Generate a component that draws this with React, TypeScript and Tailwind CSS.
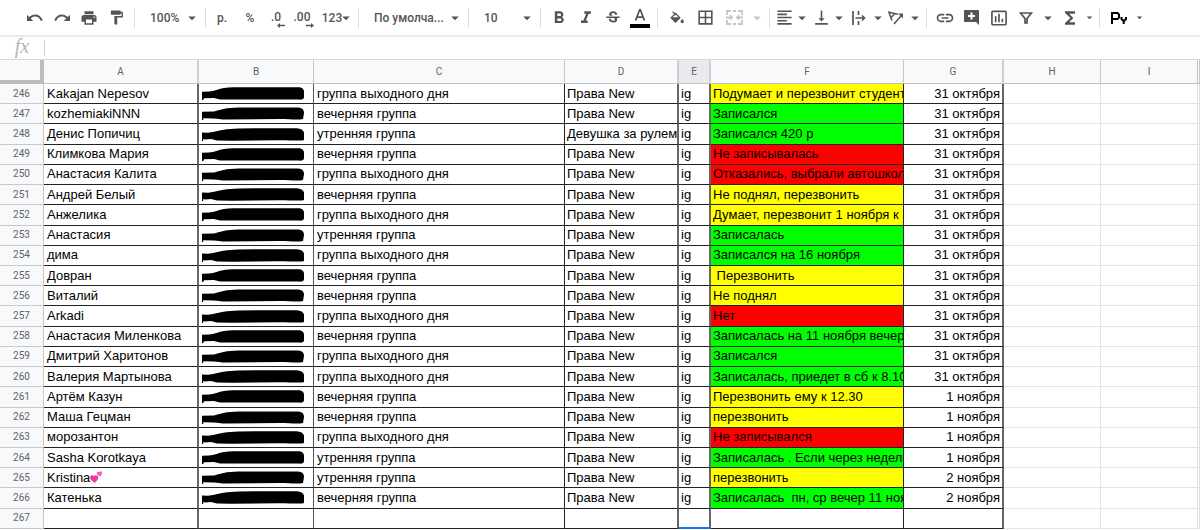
import type { ReactNode } from "react";
import {
  MdPrint, MdFormatPaint, MdArrowDropDown, MdFormatBold, MdFormatItalic,
  MdStrikethroughS, MdBorderAll, MdFormatAlignLeft, MdVerticalAlignBottom,
  MdInsertLink, MdInsertChartOutlined, MdFunctions,
} from "react-icons/md";

type Tone = "y" | "g" | "r";
type Row = [number, string, string, string, Tone, string, string];

const WEEKEND = "группа выходного дня";
const EVENING = "вечерняя группа";
const MORNING = "утренняя группа";
const NEW = "Права New";
const OCT = "31 октября";

const rows: Row[] = [
  [246, "Kakajan Nepesov", WEEKEND, NEW, "y", "Подумает и перезвонит студент", OCT],
  [247, "kozhemiakiNNN", EVENING, NEW, "g", "Записался", OCT],
  [248, "Денис Попичиц", MORNING, "Девушка за рулем", "g", "Записался 420 р", OCT],
  [249, "Климкова Мария", EVENING, NEW, "r", "Не записывалась", OCT],
  [250, "Анастасия Калита", WEEKEND, NEW, "r", "Отказались, выбрали автошколу", OCT],
  [251, "Андрей Белый", EVENING, NEW, "y", "Не поднял, перезвонить", OCT],
  [252, "Анжелика", WEEKEND, NEW, "y", "Думает, перезвонит 1 ноября к ве", OCT],
  [253, "Анастасия", MORNING, NEW, "g", "Записалась", OCT],
  [254, "дима", WEEKEND, NEW, "g", "Записался на 16 ноября", OCT],
  [255, "Довран", EVENING, NEW, "y", " Перезвонить", OCT],
  [256, "Виталий", EVENING, NEW, "y", "Не поднял", OCT],
  [257, "Arkadi", WEEKEND, NEW, "r", "Нет", OCT],
  [258, "Анастасия Миленкова", EVENING, NEW, "g", "Записалась на 11 ноября вечер п", OCT],
  [259, "Дмитрий Харитонов", WEEKEND, NEW, "g", "Записался", OCT],
  [260, "Валерия Мартынова", WEEKEND, NEW, "g", "Записалась, приедет в сб к 8.10", OCT],
  [261, "Артём Казун", EVENING, NEW, "y", "Перезвонить ему к 12.30", "1 ноября"],
  [262, "Маша Гецман", EVENING, NEW, "y", "перезвонить", "1 ноября"],
  [263, "морозантон", WEEKEND, NEW, "r", "Не записывался", "1 ноября"],
  [264, "Sasha Korotkaya", MORNING, NEW, "g", "Записалась . Если через неделю", "1 ноября"],
  [265, "Kristina", MORNING, NEW, "y", "перезвонить", "2 ноября"],
  [266, "Катенька", EVENING, NEW, "g", "Записалась  пн, ср вечер 11 нояб", "2 ноября"],
];

const tones: Record<Tone, string> = { y: "bg-[#ffff00]", g: "bg-[#00ff00]", r: "bg-[#ff0000]" };

const cell = "overflow-hidden whitespace-pre border-b border-b-[#222] py-0 leading-4";
const faint = "border-r border-b border-[#e2e3e3] p-0";
const head = "border-b border-b-[#c0c0c0] p-0 font-normal";

function Caret({ className = "w-4", size = 18 }: { className?: string; size?: number }) {
  return (
    <span className={`flex shrink-0 justify-center ${className}`}>
      <MdArrowDropDown size={size} className="shrink-0" />
    </span>
  );
}

function Tool({ label, className = "w-[27px]", children }: { label: string; className?: string; children: ReactNode }) {
  return (
    <button type="button" aria-label={label} className={`flex h-7 shrink-0 items-center justify-center ${className}`}>
      {children}
    </button>
  );
}

function Picker({ label, value, className }: { label: string; value: string; className: string }) {
  return (
    <label className={`grid shrink-0 items-center ${className}`}>
      <select aria-label={label} className="col-start-1 row-start-1 h-7 w-full appearance-none bg-transparent pl-[11px] outline-none">
        <option>{value}</option>
      </select>
      <span className="pointer-events-none col-start-1 row-start-1 justify-self-end">
        <MdArrowDropDown size={18} />
      </span>
    </label>
  );
}

function Divider() {
  return <span className="mx-1 h-5 w-px shrink-0 bg-[#dadce0]" />;
}

function Decimals({ text, left }: { text: string; left: boolean }) {
  return (
    <span className="flex flex-col items-end pt-1">
      <span className="h-3 pr-1 leading-3">{text}</span>
      <svg width="8" height="5" viewBox="0 0 8 5" fill="currentColor">
        {left ? <path d="M3 0v1.700h5v1.600H3V5L0 2.500z" /> : <path d="M5 0v1.700H0v1.600h5V5l3-2.500z" />}
      </svg>
    </span>
  );
}

function CurvedArrow({ flip = false }: { flip?: boolean }) {
  return (
    <svg className={flip ? "-scale-x-100" : ""} width="16" height="8" viewBox="0 0 16 8">
      <path fill="currentColor" d="M0 .8 2.100 3C6.500-1 13.300-.4 15.700 6.300L13.900 7C11.800 2.100 7.300 1.300 3.700 4.500L6.200 7H0z" />
    </svg>
  );
}

const scribbles = [
  "M0 4.800 L7 4.600 C12 4 17 1.600 22 .9 C28 .2 34 .2 40 .2 L96 .2 C100 .2 102 2 102 5 L102 10 C102 12.400 100 13 96 12.600 L50 12.600 L18 12.400 L12 11 L2 11.200 L1.200 13 L0 13z",
  "M0 4.800 L12 4.600 C17 3 20 2 25 1.200 L36 .6 L96 .4 C100 .6 102 2.600 102 6 L101 12 C96 13 89 12.200 78 12 L24 12.600 C19 12.400 15 11.600 12 11.400 L1.200 11.200 L1.200 13 L0 13z",
  "M0 4.600 L6 4.800 C13 4 18 2 25 1.200 L36 .4 L92 .2 C99 .4 101 1.600 102 4.400 L102 12 C99 13 91 12.200 76 12.200 L30 12.800 L15 12.400 L9 11 L3 11.600 L1.200 11 L1.200 13 L0 13z",
];

function Scribble({ index }: { index: number }) {
  return (
    <svg aria-hidden="true" className="block" width="102" height="13" viewBox="0 0 102 13">
      <path d={scribbles[index % scribbles.length]} />
    </svg>
  );
}

function Hearts() {
  return (
    <svg aria-hidden="true" className="inline-block align-[-1px]" width="12" height="12" viewBox="0 0 12 12">
      <path fill="#f0359c" d="M4.600 11.800C1.500 10 0 8 .1 6.100 .3 4 2.800 3.500 4 5.200 5.300 3.400 8 4 8.200 6 8.400 8 6.800 10.200 4.600 11.800z" />
      <path fill="#f65aae" d="M10.300 5.200C8.200 4.600 7 3.600 6.800 2.400 6.700 1 8.200.4 9.200 1.400 9.600 0 11.500-.1 11.900 1.300 12.200 2.600 11.500 4 10.300 5.200z" />
    </svg>
  );
}

function Toolbar() {
  return (
    <div role="toolbar" className="flex h-[35px] shrink-0 items-center overflow-hidden pl-[21px] text-[12px] font-medium text-[#50555a]">
      <Tool label="Отменить"><CurvedArrow /></Tool>
      <Tool label="Повторить"><CurvedArrow flip /></Tool>
      <Tool label="Печать"><MdPrint size={18} /></Tool>
      <Tool label="Копировать формат" className="w-7"><MdFormatPaint size={17} /></Tool>
      <Divider />
      <Picker label="Масштаб" value="100%" className="w-[62px]" />
      <Divider />
      <Tool label="Денежный формат" className="w-6">р.</Tool>
      <Tool label="Процентный формат" className="w-8">%</Tool>
      <Tool label="Меньше знаков" className="w-6"><Decimals text=".0" left /></Tool>
      <Tool label="Больше знаков" className="w-7"><Decimals text=".00" left={false} /></Tool>
      <Tool label="Другие форматы" className="w-9">123<Caret className="w-2" /></Tool>
      <Divider />
      <Picker label="Шрифт" value="По умолча..." className="w-[101px]" />
      <Divider />
      <Picker label="Размер шрифта" value="10" className="w-[63px]" />
      <Divider />
      <Tool label="Полужирный"><MdFormatBold size={20} /></Tool>
      <Tool label="Курсив"><MdFormatItalic size={20} /></Tool>
      <Tool label="Зачеркнутый"><MdStrikethroughS size={18} /></Tool>
      <Tool label="Цвет текста">
        <svg width="20" height="21" viewBox="0 0 20 21">
          <path fill="currentColor" d="M9.100 2 4.600 13.600h1.900l1-2.700h5l1 2.700h1.900L10.900 2zM8.100 9.300 10 4.200l1.900 5.100z" />
          <path fill="#000" d="M0 17h20v4H0z" />
        </svg>
      </Tool>
      <Divider />
      <Tool label="Цвет заливки" className="w-[29px]">
        <svg width="14" height="13" viewBox="0 0 14 13">
          <path fill="none" stroke="currentColor" strokeWidth="1.300" d="M2.500.6 6 4M5.500 2.400 1.200 6.700 5.500 11 9.800 6.700z" />
          <path fill="currentColor" d="M.8 6.300h9.500L5.500 11.500zM12.200 7.800q1.700 2 1.700 3t-1.700 1.500q-1.700-.5-1.700-1.500t1.700-3z" />
        </svg>
      </Tool>
      <Tool label="Границы" className="w-[29px]"><MdBorderAll size={19} /></Tool>
      <Tool label="Объединить ячейки" className="w-[29px] text-[#c4c6c8]">
        <svg width="17" height="15" viewBox="0 0 17 15" fill="none" stroke="currentColor" strokeWidth="1.800">
          <path d="M1 5V1h4M7 1h3M12 1h4v4M1 10v4h4M7 14h3M12 14h4v-4M0 7.500h6M4 5.300l2.200 2.200L4 9.700M17 7.500h-6M13 5.300l-2.200 2.200L13 9.700" />
        </svg>
      </Tool>
      <span className="text-[#c4c6c8]"><Caret /></span>
      <Divider />
      <Tool label="Выравнивание по горизонтали" className="w-[37px]"><MdFormatAlignLeft size={19} className="shrink-0" /><Caret /></Tool>
      <Tool label="Выравнивание по вертикали" className="w-[37px]"><MdVerticalAlignBottom size={19} className="shrink-0" /><Caret /></Tool>
      <Tool label="Перенос текста" className="w-[37px]">
        <svg className="mx-1 shrink-0" width="14" height="14" viewBox="0 0 14 14" fill="none" stroke="currentColor" strokeWidth="1.700">
          <path d="M1 0v14M6.500 0v4M6.500 10v4M3.500 7H12M10 4.500 12.500 7 10 9.500" />
        </svg>
        <Caret />
      </Tool>
      <Tool label="Поворот текста" className="w-[37px]">
        <svg className="mx-1 shrink-0" width="15" height="14" viewBox="0 0 15 14" fill="none" stroke="currentColor" strokeWidth="1.500">
          <path d="M4 9.500.900 1.200 9.800 3.200M3 6.500l3.800-3.800M6 13l7-8" />
          <path fill="currentColor" stroke="none" d="M10 2.500h5v5z" />
        </svg>
        <Caret />
      </Tool>
      <Divider />
      <Tool label="Вставить ссылку"><MdInsertLink size={20} /></Tool>
      <Tool label="Добавить комментарий">
        <svg width="15" height="15" viewBox="0 0 15 15">
          <path fill="currentColor" d="M1 0h13q1 0 1 1v14l-3-3H1q-1 0-1-1V1q0-1 1-1z" />
          <path stroke="#fff" strokeWidth="2" d="M7.500 2.500v7M4 6h7" />
        </svg>
      </Tool>
      <Tool label="Вставить диаграмму"><MdInsertChartOutlined size={20} /></Tool>
      <Tool label="Фильтр" className="w-7">
        <svg width="14" height="12" viewBox="0 0 14 12" fill="none" stroke="currentColor" strokeWidth="1.700">
          <path d="M1.500 1h11L8 6.500V11H6V6.500z" />
        </svg>
      </Tool>
      <Caret />
      <Tool label="Функции"><MdFunctions size={20} /></Tool>
      <Caret className="w-3" size={13} />
      <Divider />
      <Tool label="Способы ввода" className="w-[30px] text-black">
        <svg width="16" height="13" viewBox="0 0 16 13" fill="none" stroke="currentColor" strokeWidth="2">
          <path d="M1 13V2h5.500L8 3.500v3L6.500 8H1M10.500 6v2l1.500 1.500h1.500L15 8V6M12.700 9v4" />
        </svg>
      </Tool>
      <Caret className="w-[11px]" size={13} />
    </div>
  );
}

export default function App() {
  return (
    <div className="flex h-screen flex-col overflow-hidden bg-white pb-px font-[Roboto,sans-serif] text-black">
      <Toolbar />
      <div className="flex h-[25px] shrink-0 items-center border-t-2 border-b border-t-[#e8eaed] border-b-[#d5d7d9]">
        <label htmlFor="formula" className="flex h-5 w-11 items-center justify-center pb-1 font-['Liberation_Serif',serif] text-[20px] leading-5 text-[#b5b5b5] italic">
          fx
        </label>
        <input id="formula" type="text" className="h-4 min-w-0 flex-1 border-l border-[#d0d0d0] px-2 text-[13px] outline-none" />
      </div>
      <div className="min-h-0 flex-1">
        <table className="h-full w-full table-fixed border-separate border-spacing-0 font-['Liberation_Sans',Arial,sans-serif] text-[13px]">
          <colgroup>
            <col className="w-[44px]" />
            <col className="w-[155px]" />
            <col className="w-[115px]" />
            <col className="w-[251px]" />
            <col className="w-[114px]" />
            <col className="w-[32px]" />
            <col className="w-[193px]" />
            <col className="w-[100px]" />
            <col className="w-[97px]" />
            <col className="w-[97px]" />
            <col />
          </colgroup>
          <thead>
            <tr className="h-6 bg-[#f8f9fa] font-[Roboto,sans-serif] text-[10px] text-[#5f6368]">
              <td className="border-r-4 border-b-4 border-[#bcbcbc] p-0" />
              {["A", "B", "C", "D", "E", "F", "G", "H", "I", ""].map((name, i) => (
                <th
                  key={i}
                  scope="col"
                  className={`${head} ${name === "E" ? "bg-[#e8eaed]" : ""} ${"ADEG".includes(name) && name ? "border-r-2 border-r-[#cfcfcf]" : "border-r border-r-[#c8c8c8]"}`}
                >
                  {name}
                </th>
              ))}
            </tr>
          </thead>
          <tbody>
            {rows.map(([n, name, group, course, tone, note, date], i) => (
              <tr key={n}>
                <RowNumber n={n} />
                <td className={`${cell} border-r-2 border-r-[#666] px-[3px]`}>{name}{n === 265 && <Hearts />}</td>
                <td className={`${cell} border-r border-r-[#555] px-[3px]`}><Scribble index={i} /></td>
                <td className={`${cell} border-r border-r-[#222] px-[3px]`}>{group}</td>
                <td className={`${cell} border-r-2 border-r-[#666] pl-[2px]`}>{course}</td>
                <td className={`${cell} border-r-2 border-r-[#666] pl-[2px]`}>ig</td>
                <td className={`${cell} border-r border-r-[#222] pl-[2px] ${tones[tone]}`}>{note}</td>
                <td className={`${cell} border-r-2 border-r-[#666] pr-[2px] text-right`}>{date}</td>
                <td className={faint} />
                <td className={faint} />
                <td className={faint} />
              </tr>
            ))}
            <tr>
              <RowNumber n={267} />
              <td className={`${cell} border-r-2 border-r-[#666]`} />
              <td className={`${cell} border-r border-r-[#555]`} />
              <td className={`${cell} border-r border-r-[#222]`} />
              <td className={`${cell} border-r-2 border-r-[#666]`} />
              <td className="border-r-2 border-b-2 border-r-[#666] border-b-[#1a73e8] p-0" />
              <td className={`${cell} border-r border-r-[#222]`} />
              <td className={`${cell} border-r-2 border-r-[#666]`} />
              <td className={faint} />
              <td className={faint} />
              <td className={faint} />
            </tr>
          </tbody>
        </table>
      </div>
    </div>
  );
}

function RowNumber({ n }: { n: number }) {
  return (
    <th scope="row" className="border-r border-b border-[#c8c8c8] bg-[#f8f9fa] p-0 font-[Roboto,sans-serif] text-[10px] leading-4 font-normal text-[#5f6368]">
      {n}
    </th>
  );
}
